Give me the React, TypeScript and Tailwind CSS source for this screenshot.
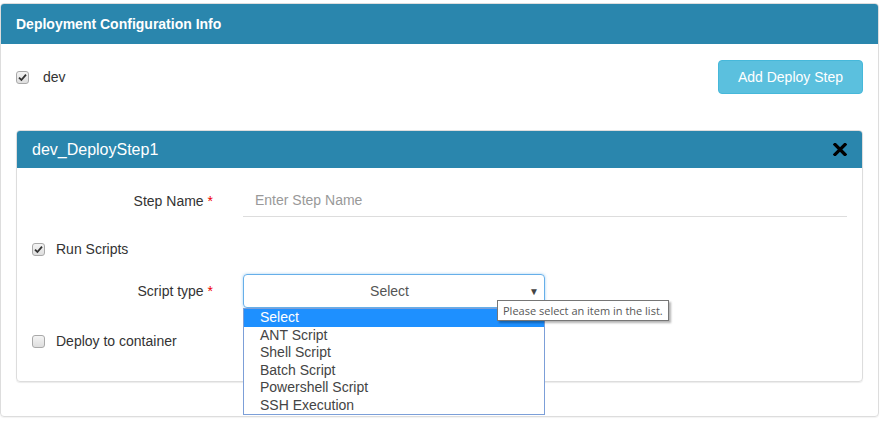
import React from "react";

const Check = ({ checked }: { checked?: boolean }) => (
  <span className="inline-flex h-[13px] w-[13px] shrink-0 items-center justify-center rounded-[3px] border border-[#a9a9a9] bg-gradient-to-b from-[#f4f4f4] to-[#dedede]">
    {checked && (
      <svg width="9" height="9" viewBox="0 0 9 9">
        <path d="M1 4.6 L3.4 7 L8 1.6" fill="none" stroke="#333" strokeWidth="1.8" />
      </svg>
    )}
  </span>
);

const options = ["Select", "ANT Script", "Shell Script", "Batch Script", "Powershell Script", "SSH Execution"];

export default function App() {
  return (
    <div className="min-h-[421px] bg-white pt-[3px] pr-[3px] text-[#333] font-['Liberation_Sans',Arial,sans-serif]">
      <div className="rounded-[4px] border border-[#ddd] shadow-[0_1px_1px_rgba(0,0,0,0.05)]">
        <div className="flex h-[40px] items-center rounded-t-[3px] bg-[#2a86ad] px-[15px] text-[14px] font-bold text-white">
          Deployment Configuration Info
        </div>
        <div className="px-[15px] pt-[16px] pb-[34px]">
          <div className="flex h-[34px] items-center justify-between">
            <label className="flex items-center gap-[14px] text-[14px]">
              <Check checked />
              dev
            </label>
            <button className="h-[34px] rounded-[4px] border border-[#46b8da] bg-[#5bc0de] px-[19px] text-[14px] text-white">
              Add Deploy Step
            </button>
          </div>

          <div className="mt-[36px] rounded-[4px] border border-[#ddd] shadow-[0_1px_1px_rgba(0,0,0,0.08)]">
            <div className="flex h-[37px] items-center justify-between rounded-t-[3px] bg-[#2a86ad] px-[15px] text-[16px] text-white">
              <span>dev_DeployStep1</span>
              <svg width="14" height="13" viewBox="0 0 14 13">
                <path d="M2 1.5 L12 11.5 M12 1.5 L2 11.5" stroke="#000" strokeWidth="3.2" strokeLinecap="square" />
              </svg>
            </div>
            <div className="px-[15px] pt-[17px] pb-[24px] text-[14px]">
              <div className="flex h-[32px] items-center">
                <div className="w-[181px] text-right">
                  Step Name <span className="text-[#e00]">*</span>
                </div>
                <div className="ml-[30px] flex h-full flex-1 items-center border-b border-[#ddd] pl-[12px] text-[#999]">
                  Enter Step Name
                </div>
              </div>

              <div className="mt-[16px] flex h-[32px] items-center gap-[11px]">
                <Check checked />
                Run Scripts
              </div>

              <div className="mt-[9px] flex h-[34px] items-center">
                <div className="w-[181px] text-right">
                  Script type <span className="text-[#e00]">*</span>
                </div>
                <div className="relative ml-[30px] w-[302px]">
                  <div className="flex h-[34px] items-center rounded-[4px] border border-[#66afe9] shadow-[0_0_3px_rgba(102,175,233,0.6)]">
                    <span className="flex-1 pl-[6px] text-center text-[#555]">Select</span>
                    <span className="pr-[5px] text-[10px] text-[#444]">▼</span>
                  </div>
                  <div className="absolute top-[34px] left-0 z-10 w-[302px] border border-[#7c9fd8] bg-white">
                    {options.map((o, i) => (
                      <div
                        key={o}
                        className={`h-[17.5px] pl-[16px] leading-[17.5px] ${i === 0 ? "bg-[#1e90ff] text-white" : "text-[#444]"}`}
                      >
                        {o}
                      </div>
                    ))}
                  </div>
                  <div className="absolute top-[26px] left-[254px] z-20 whitespace-nowrap border border-[#767676] bg-white px-[5px] py-[1px] text-[11px] leading-[17px] text-[#575757] shadow-[2px_2px_2px_rgba(0,0,0,0.3)] font-['Open_Sans','Noto_Sans',sans-serif]">
                    Please select an item in the list.
                  </div>
                </div>
              </div>

              <div className="mt-[17px] flex h-[32px] items-center gap-[11px]">
                <Check />
                Deploy to container
              </div>
            </div>
          </div>
        </div>
      </div>
    </div>
  );
}
